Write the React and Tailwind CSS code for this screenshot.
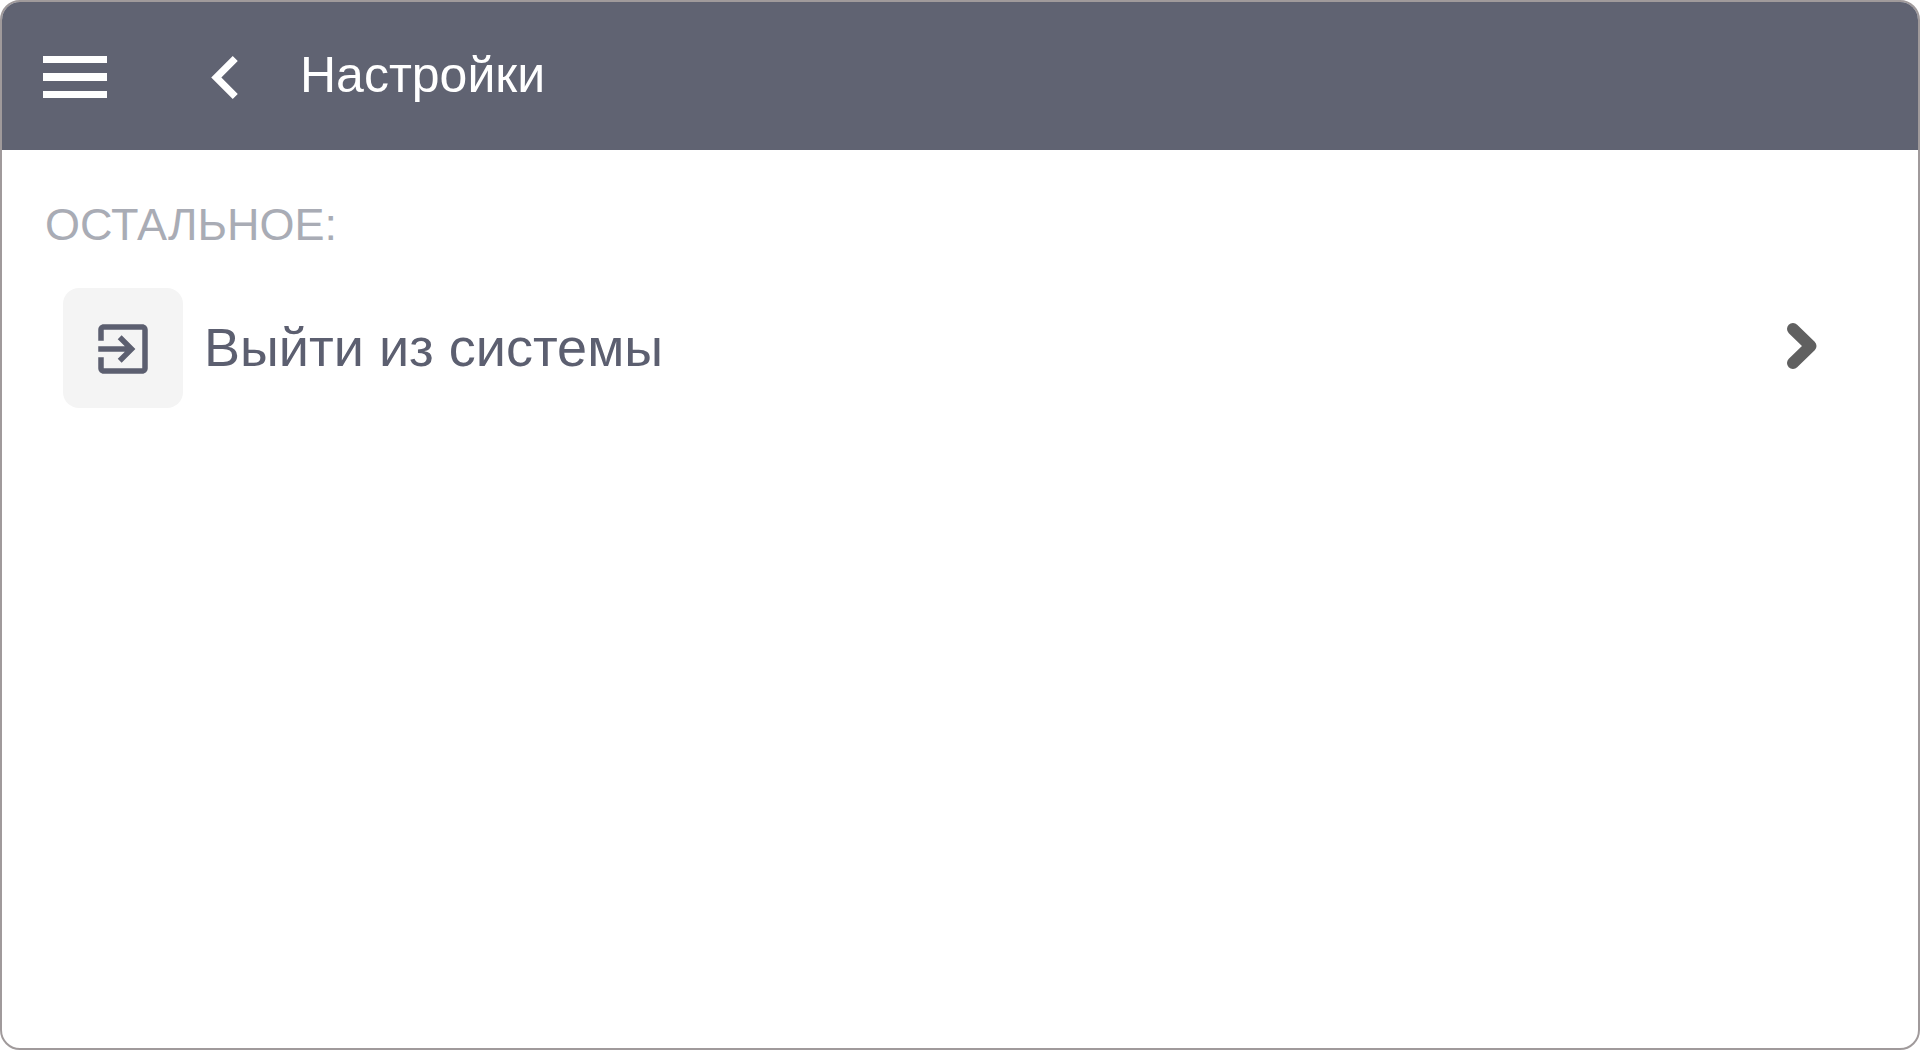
function MenuIcon() {
  return (
    <svg viewBox="0 0 64 42" className="h-[42px] w-16" fill="currentColor" aria-hidden="true">
      <path d="M0 0h64v7H0zM0 17h64v8H0zM0 35h64v7H0z" />
    </svg>
  );
}

function BackIcon() {
  return (
    <svg viewBox="8 6 7.41 12" className="h-[43px] w-[27px]" fill="currentColor" aria-hidden="true">
      <path d="M15.41 7.41 14 6l-6 6 6 6 1.41-1.41L10.83 12z" />
    </svg>
  );
}

function ExitIcon() {
  return (
    <svg viewBox="0 0 24 24" className="size-[66px]" fill="currentColor" aria-hidden="true">
      <path d="M10.09 15.59 11.5 17l5-5-5-5-1.41 1.41L12.67 11H3v2h9.67l-2.58 2.59zM19 3H5c-1.11 0-2 .9-2 2v4h2V5h14v14H5v-4H3v4c0 1.1.89 2 2 2h14c1.1 0 2-.9 2-2V5c0-1.1-.9-2-2-2z" />
    </svg>
  );
}

function ForwardIcon() {
  return (
    <svg viewBox="0 0 32 48" className="mb-1 h-12 w-8 text-[#606060]" fill="none" aria-hidden="true">
      <path d="M7 7 24.5 24 7 41" stroke="currentColor" strokeWidth="12" strokeLinecap="round" strokeLinejoin="round" />
    </svg>
  );
}

export default function App() {
  return (
    <div className="flex min-h-screen flex-col overflow-hidden rounded-[20px] border-2 border-[#a09a9b] bg-white font-['Liberation_Sans',Arial,sans-serif]">
      <header className="flex h-[148px] items-center bg-[#606372] pl-[41px] text-white">
        <button type="button" aria-label="Меню" className="mt-0.5">
          <MenuIcon />
        </button>
        <button type="button" aria-label="Назад" className="mt-0.5 ml-[104px]">
          <BackIcon />
        </button>
        <h1 className="mb-0.5 ml-[62px] text-[50px] leading-[60px]">Настройки</h1>
      </header>
      <main className="pt-[47px]">
        <h2 className="pl-[43px] text-[45px] leading-[56px] text-[#a9acb5]">ОСТАЛЬНОЕ:</h2>
        <button type="button" className="mt-[35px] flex w-full items-center pr-[100px] pl-[61px] text-left text-[#5c5f70]">
          <span className="flex size-[120px] items-center justify-center rounded-2xl bg-[#f4f4f4] pt-0.5">
            <ExitIcon />
          </span>
          <span className="mb-0.5 ml-[21px] flex-1 text-[54px] leading-[64px]">Выйти из системы</span>
          <ForwardIcon />
        </button>
      </main>
    </div>
  );
}
